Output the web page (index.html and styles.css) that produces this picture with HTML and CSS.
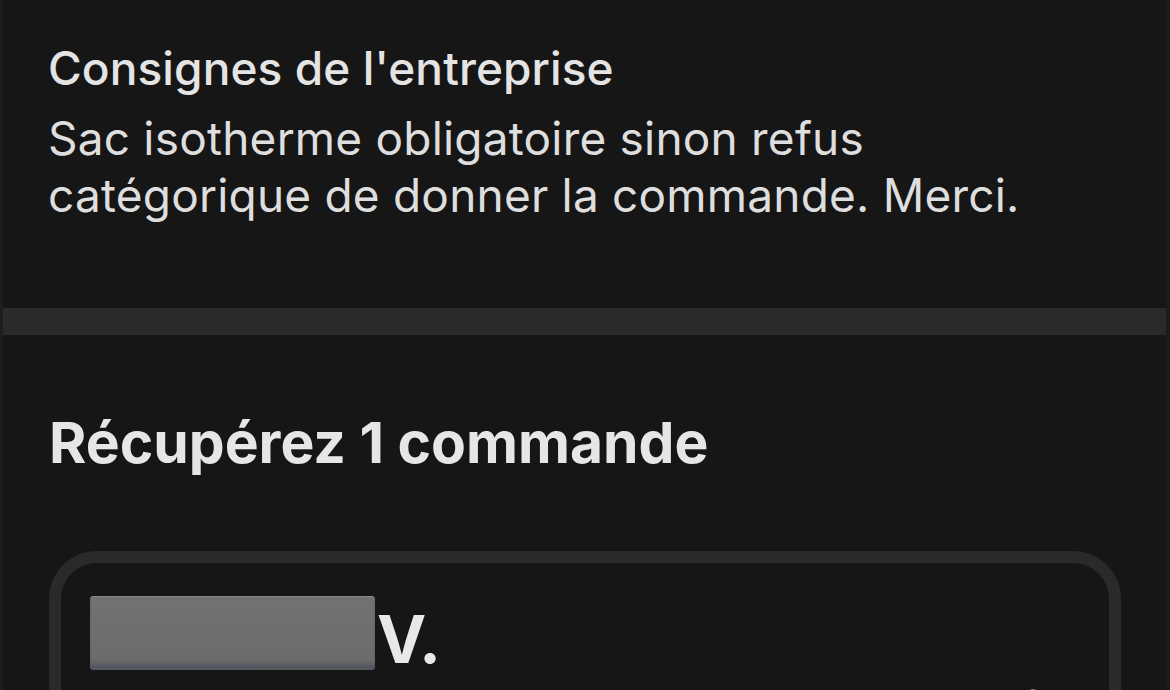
FILE: index.html
```html
<!DOCTYPE html>
<html lang="fr">
<head>
    <meta name="viewport" content="width=device-width,initial-scale=1.0">
    <title>Récupérez 1 commande</title>
    <link rel="stylesheet" href="styles.css">
</head>
<body>

    <div class="screen">
        <div class="notice">
            <h2>Consignes de l'entreprise</h2>
            <p>Sac isotherme obligatoire sinon refus catégorique de donner la commande. Merci.</p>
        </div>

        <div class="band"></div>

        <div class="pickup">
            <h1>Récupérez 1 commande</h1>

            <div class="order-card">
                <div class="customer">
                    <span class="blurred"></span>
                    <span class="initial">V.</span>
                </div>
                <div class="card-row">
                    <span class="dot"></span>
                </div>
            </div>
        </div>
    </div>

</body>
</html>
```

FILE: styles.css
```css
body {
    margin: 0;
    background: #161616;
    font-family: Inter, "Noto Sans", sans-serif;
    color: #e6e6e6;
    overflow: hidden;
}

.screen {
    height: 690px;
    border-left: 3px solid #1e1e1e;
    border-right: 4px solid #1c1c1c;
    overflow: hidden;
}

.notice {
    height: 308px;
    box-sizing: border-box;
    padding: 40px 40px 0 45px;
}

.notice h2 {
    margin: 0;
    font-size: 46px;
    font-weight: 500;
    line-height: 56px;
    letter-spacing: 0.1px;
    color: #e4e4e4;
}

.notice p {
    max-width: 1000px;
    margin: 14px 0 0;
    font-size: 46px;
    font-weight: 400;
    line-height: 57px;
    letter-spacing: 0.2px;
    color: #dedede;
}

.band {
    height: 27px;
    background: #2a2a2a;
    margin-left: -3px;
}

.pickup {
    padding: 73px 45px 0 46px;
}

.pickup h1 {
    margin: 0;
    font-size: 57px;
    font-weight: 700;
    line-height: 70px;
    color: #e6e6e6;
}

.order-card {
    margin-top: 73px;
    height: 300px;
    border: 12px solid #2a2a2a;
    border-radius: 48px;
    padding: 32px 30px 0 29px;
}

.customer {
    display: flex;
    align-items: flex-end;
    height: 75px;
}

.blurred {
    width: 285px;
    height: 74px;
    border-radius: 4px;
    background: linear-gradient(180deg, #727272 0%, #6c6c6c 85%, #4f5360 100%);
    box-shadow: inset 0 1px 0 #8a8a8a, inset 0 -4px 2px #55575f;
}

.initial {
    font-size: 66px;
    font-weight: 700;
    line-height: 1;
    margin-left: 2px;
    margin-bottom: -2px;
    letter-spacing: -1px;
    color: #e8e8e8;
}

.card-row {
    display: flex;
    justify-content: flex-end;
    padding-right: 40px;
    margin-top: 19px;
}

.dot {
    width: 12px;
    height: 12px;
    border-radius: 50%;
    background: #777;
}
```
